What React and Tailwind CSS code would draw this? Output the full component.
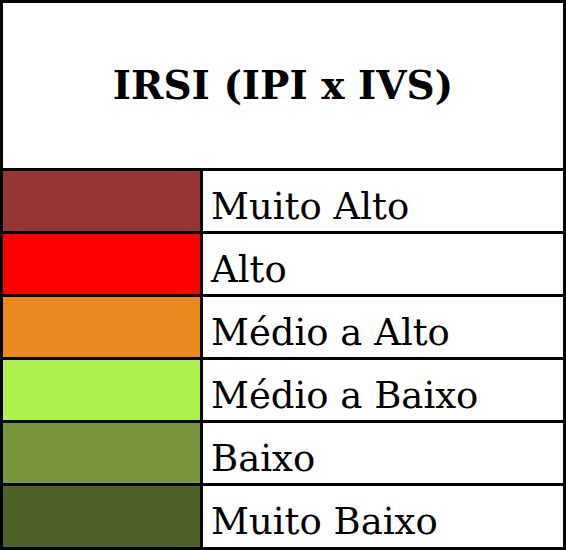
const levels = [
  { label: 'Muito Alto', color: 'bg-[#963634]' },
  { label: 'Alto', color: 'bg-[#ff0000]' },
  { label: 'Médio a Alto', color: 'bg-[#e9881f]' },
  { label: 'Médio a Baixo', color: 'bg-[#aef24f]' },
  { label: 'Baixo', color: 'bg-[#78973d]' },
  { label: 'Muito Baixo', color: 'bg-[#4e6129]' },
]

export default function App() {
  return (
    <div className="w-[566px] h-[550px] bg-white border-[3px] border-black flex flex-col font-['DejaVu_Serif',serif] text-black">
      {/* Title */}
      <div className="h-[168px] shrink-0 flex items-center justify-center border-b-[3px] border-black">
        <h1 className="text-[39px] font-bold leading-none">IRSI (IPI x IVS)</h1>
      </div>

      {/* Legend rows */}
      {levels.map((level, i) => (
        <div
          key={level.label}
          className={
            i < levels.length - 1
              ? 'h-[63px] shrink-0 flex border-b-[3px] border-black'
              : 'flex-1 flex'
          }
        >
          <div className={`w-[200px] shrink-0 border-r-[3px] border-black ${level.color}`} />
          <div className="flex-1 flex items-center pl-[8px] pt-[10px] text-[37px] leading-none">
            {level.label}
          </div>
        </div>
      ))}
    </div>
  )
}
